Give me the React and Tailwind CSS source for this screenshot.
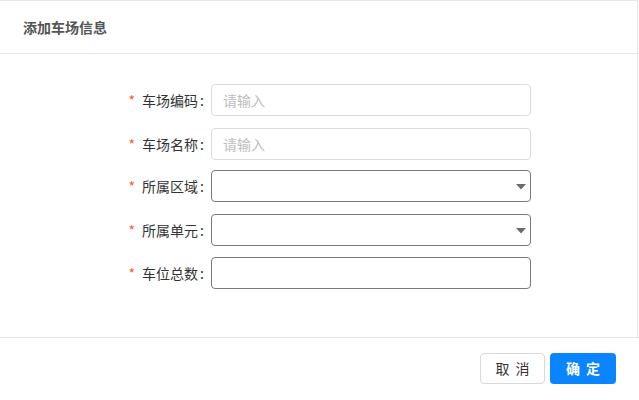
import React from 'react';

const fields = [
  { label: '车场编码', type: 'text', mb: 'mb-[12px]' },
  { label: '车场名称', type: 'text', mb: 'mb-[10px]' },
  { label: '所属区域', type: 'select', mb: 'mb-[12px]' },
  { label: '所属单元', type: 'select', mb: 'mb-[11px]' },
  { label: '车位总数', type: 'number', mb: 'mb-0' },
];

const Caret = () => (
  <svg width="10" height="6" viewBox="0 0 10 6" className="absolute right-[4px] top-[13px]">
    <path d="M0 0 H10 L5 5.5 Z" fill="#6b6b6b" />
  </svg>
);

const App = () => {
  return (
    <div
      className="w-[639px] h-[400px] bg-white flex flex-col"
      style={{ fontFamily: '"Noto Sans CJK SC", "Noto Sans", sans-serif' }}
    >
      <div className="w-[638px] border-r border-[#e4e4e4] flex flex-col">
        <div className="h-[54px] border-t border-b border-[#e6e6e6] flex items-center pl-[23px]">
          <h3 className="text-[14px] font-bold text-[#555] leading-none">添加车场信息</h3>
        </div>
        <div className="h-[283px] pt-[30px] pl-[107px] flex flex-col">
          {fields.map((f) => (
            <div key={f.label} className={`flex items-center h-[32px] ${f.mb}`}>
              <label className="w-[104px] pr-[7px] text-right text-[14px] text-[#333] leading-none">
                <span className="text-[#ff5a1f] mr-[7px]">*</span>
                {f.label}
                <span className="ml-[2px]">:</span>
              </label>
              {f.type === 'text' && (
                <input
                  placeholder="请输入"
                  className="w-[320px] h-[32px] border border-[#dcdcdc] rounded-[4px] px-[11px] text-[14px] text-[#333] placeholder:text-[#bdbdbd] outline-none"
                />
              )}
              {f.type === 'select' && (
                <div className="relative w-[320px] h-[32px] border border-[#7a7a7a] rounded-[4px]">
                  <Caret />
                </div>
              )}
              {f.type === 'number' && (
                <input className="w-[320px] h-[32px] border border-[#7a7a7a] rounded-[4px] px-[11px] text-[14px] outline-none" />
              )}
            </div>
          ))}
        </div>
      </div>
      <div className="flex-1 border-t border-[#e6e6e6] flex justify-end items-start pt-[15px] pr-[23px] gap-[5px]">
        <button className="w-[65px] h-[31px] border border-[#d9d9d9] rounded-[4px] bg-white text-[14px] text-[#333] tracking-[6px] pl-[6px]">
          取消
        </button>
        <button className="w-[66px] h-[31px] rounded-[4px] bg-[#0a84ff] text-[14px] text-white font-bold tracking-[6px] pl-[6px]">
          确定
        </button>
      </div>
    </div>
  );
};

export default App;
